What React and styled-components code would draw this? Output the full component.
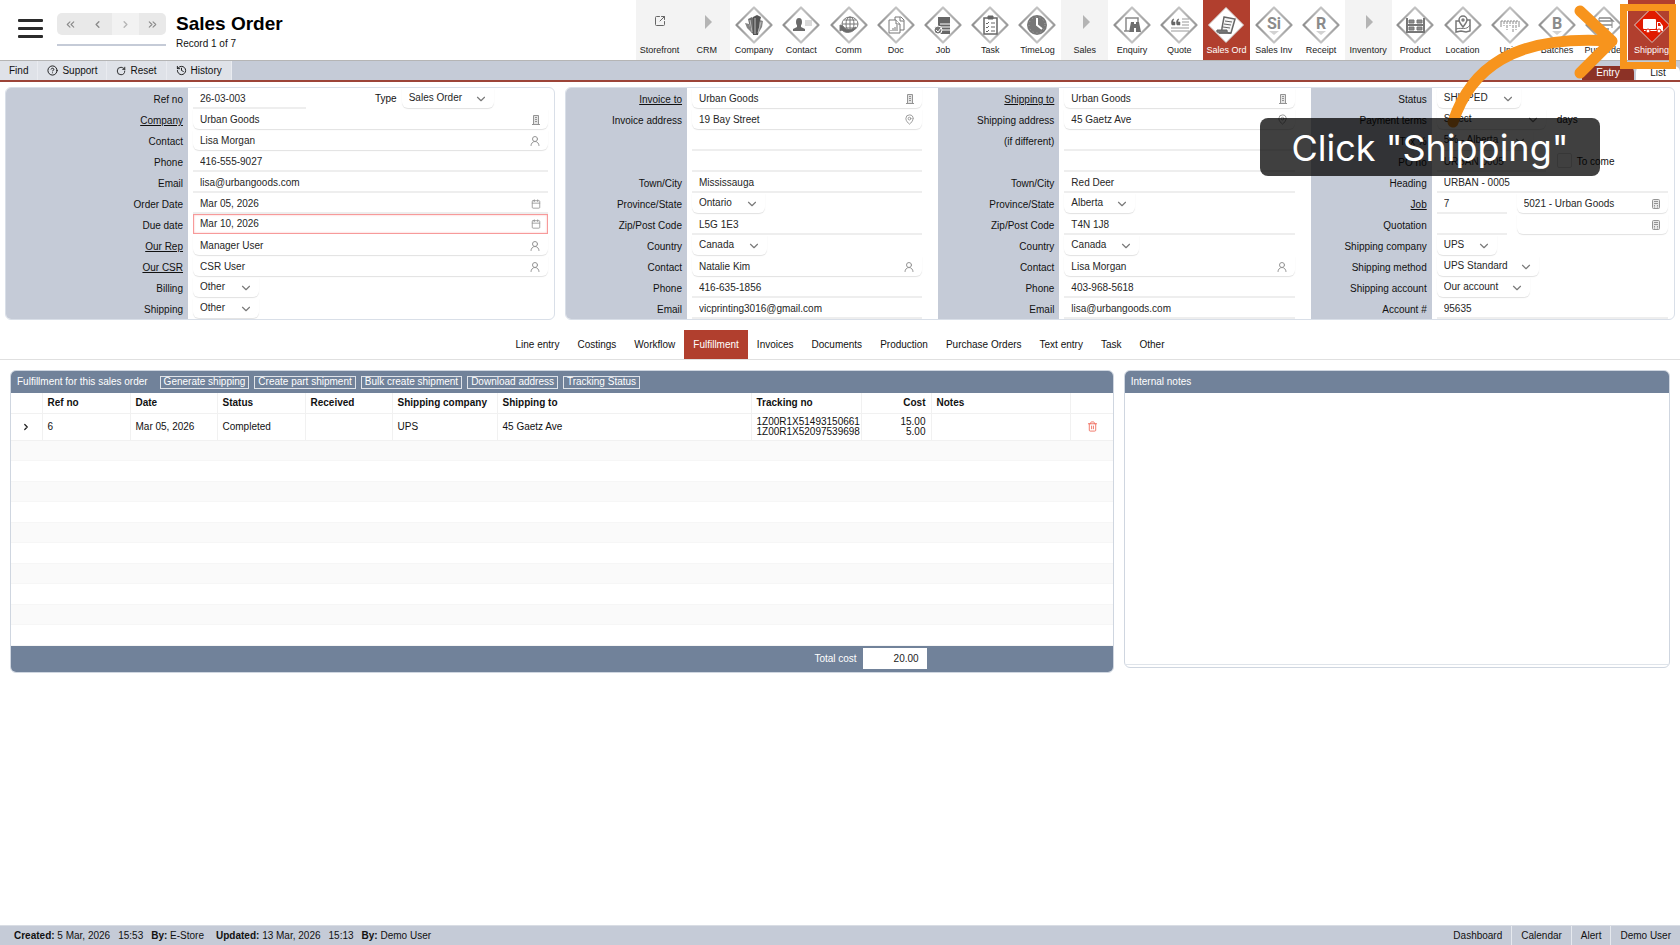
import React, { useState } from "react";
import styled, { createGlobalStyle, css } from "styled-components";
import {
  Calendar,
  ChevronDown,
  ChevronLeft,
  ChevronRight,
  ChevronsLeft,
  ChevronsRight,
  CircleHelp,
  History,
  MapPin,
  RotateCw,
  SquareArrowOutUpRight,
  Trash2,
  UserRound,
} from "lucide-react";

const GlobalStyle = createGlobalStyle`
  * {
    box-sizing: border-box;
  }
  body {
    margin: 0;
    background: #fff;
    color: #111;
    font-family: "Liberation Sans", Arial, sans-serif;
    font-size: 10px;
    line-height: 12px;
  }
  button, input, select, textarea {
    font: inherit;
    color: inherit;
    margin: 0;
    padding: 0;
    border: none;
    background: none;
    outline: none;
  }
  a {
    color: inherit;
  }
`;

const Page = styled.div`
  position: relative;
  display: flex;
  flex-direction: column;
  min-height: 100vh;
`;

/* ---------- header ---------- */

const Header = styled.header`
  display: flex;
  align-items: stretch;
  height: 61px;
  padding-right: 5px;
  border-bottom: 1px solid #b5b5b5;
`;

const MenuButton = styled.button`
  align-self: flex-start;
  display: flex;
  flex-direction: column;
  gap: 5px;
  width: 25px;
  margin: 19px 14px 0 18px;
`;

const MenuLine = styled.span`
  height: 3px;
  border-radius: 1px;
  background: #2b2b2b;
`;

const Pager = styled.div`
  width: 109px;
  margin-top: 13px;
`;

const PagerButtons = styled.div`
  display: flex;
  height: 22px;
  border-radius: 5px;
  overflow: hidden;
  background: #e9e9e9;
`;

const PagerButton = styled.button`
  flex: 1;
  display: flex;
  align-items: center;
  justify-content: center;
  color: ${(props) => (props.$dim ? "#b5b5b5" : "#8a8a8a")};
  background: ${(props) => (props.$dim ? "#f2f2f2" : "transparent")};
`;

const PagerTrack = styled.div`
  height: 2px;
  margin-top: 9px;
  background: #c5cbd7;
`;

const Heading = styled.div`
  margin: 12px 0 0 10px;
`;

const Title = styled.h1`
  margin: 0;
  font-size: 19px;
  line-height: 24px;
  color: #000;
`;

const RecordCount = styled.div`
  margin-top: 2px;
`;

const Nav = styled.nav`
  display: flex;
  width: 1039px;
  margin-left: auto;
`;

const NavItem = styled.a`
  position: relative;
  flex: 1 1 0;
  display: flex;
  flex-direction: column;
  align-items: center;
  height: 60px;
  padding-top: 6px;
  font-size: 9px;
  line-height: 12px;
  text-decoration: none;
  white-space: nowrap;
  color: ${(props) => (props.$active ? "#fff" : "#222")};
  background: ${(props) =>
    props.$active ? "#b13f2e" : props.$group ? "#f3f3f3" : "transparent"};
`;

const NavIcon = styled.span`
  display: flex;
  align-items: ${(props) => (props.$high ? "flex-start" : "center")};
  justify-content: center;
  height: 38px;
  padding-top: ${(props) => (props.$high ? "9px" : "0")};
  color: #666;
`;

const Highlight = styled.span`
  position: absolute;
  z-index: 2;
  top: 4px;
  left: -8px;
  right: -1px;
  height: 65px;
  border: 7px solid #f7941d;
`;

/* ---------- tool bar ---------- */

const Toolbar = styled.div`
  display: flex;
  height: 21px;
  background: #c5cbd7;
  border-bottom: 2px solid #9c4438;
`;

const ToolButton = styled.button`
  display: flex;
  align-items: center;
  gap: 4px;
  padding: 0 9px;
  background: #dfe2e8;
  border-right: 1px solid #e9ebf0;
`;

const ViewTabs = styled.div`
  display: flex;
  align-items: flex-end;
  gap: 2px;
  margin-left: auto;
`;

const ViewTab = styled.button`
  width: ${(props) => (props.$active ? "52px" : "44px")};
  height: 14px;
  border-radius: 6px 6px 0 0;
  color: ${(props) => (props.$active ? "#fff" : "#222")};
  background: ${(props) => (props.$active ? "#8c3226" : "#fff")};
`;

/* ---------- order form ---------- */

const FormArea = styled.main`
  display: grid;
  grid-template-columns: 550fr 1110fr;
  gap: 10px;
  padding: 5px 5px 0;
`;

const Panel = styled.section`
  display: grid;
  grid-template-columns: ${(props) => props.$columns || "1fr"};
  border: 1px solid #d9dfe8;
  border-radius: 6px;
  overflow: hidden;
`;

const FormRow = styled.div`
  display: grid;
  grid-template-columns: ${(props) => (props.$wide ? "182px" : "121px")} 1fr;
  height: 21px;
`;

const FormLabel = styled.label`
  padding: 5px 5px 0 0;
  line-height: 13px;
  text-align: right;
  background: #c5cbd7;
`;

const Fields = styled.div`
  display: flex;
  align-items: flex-start;
  padding: 0 ${(props) => (props.$tight ? "6px" : "16px")} 0 5px;
`;

const fieldBox = css`
  height: 20px;
  border-radius: 0 0 6px 6px;
  box-shadow: 0 1px 1px #e2e2e2;
`;

const FieldBox = styled.span`
  display: flex;
  align-items: center;
  flex: ${(props) => (props.$width ? "none" : "1")};
  width: ${(props) => props.$width || 0}px;
  min-width: 0;
  padding: 1px 7px 0;
  color: #262626;
  ${(props) =>
    props.$boxed
      ? fieldBox
      : css`
          height: 21px;
          padding-top: 2px;
          border-bottom: 2px solid #eeeeee;
        `}
  ${(props) =>
    props.$alert &&
    css`
      padding: 0 6px;
      border-radius: 0;
      border: 1px solid #f79a9a;
      box-shadow: inset 0 0 2px #f9b5b5;
    `}
  svg {
    flex: none;
    color: #949494;
  }
`;

const FieldInput = styled.input`
  flex: 1;
  min-width: 0;
  width: 100%;
  height: 12px;
  text-overflow: clip;
`;

const SelectBox = styled.span`
  position: relative;
  width: ${(props) => props.$width}px;
  ${fieldBox}
  svg {
    position: absolute;
    top: 4px;
    right: 6px;
    color: #7a7a7a;
    pointer-events: none;
  }
`;

const SelectInput = styled.select`
  display: block;
  appearance: none;
  width: 100%;
  height: 20px;
  padding-left: 7px;
  color: #262626;
`;

const Spacer = styled.span`
  width: ${(props) => props.$width}px;
`;

const SideLabel = styled.label`
  padding: 5px 5px 0 0;
`;

const Tick = styled.input`
  appearance: none;
  width: 15px;
  height: 15px;
  margin: 2px 5px 0 0;
  border: 1px solid #dcdcdc;
  border-radius: 2px;
`;

/* ---------- section tabs ---------- */

const Tabs = styled.div`
  display: flex;
  justify-content: center;
  height: 40px;
  padding-top: 10px;
  border-bottom: 1px solid #e0e0e0;
`;

const Tab = styled.button`
  padding: 0 9px;
  color: ${(props) => (props.$active ? "#fff" : "#111")};
  background: ${(props) => (props.$active ? "#b13f2e" : "transparent")};
`;

/* ---------- lower panels ---------- */

const Lower = styled.div`
  display: grid;
  grid-template-columns: 101fr 50fr;
  align-items: start;
  gap: 10px;
  padding: 10px 10px 0;
`;

const Card = styled.section`
  border: 1px solid #cfd6e0;
  border-radius: 6px;
  overflow: hidden;
`;

const CardHeader = styled.div`
  display: flex;
  align-items: center;
  gap: 5px;
  height: 22px;
  padding: 0 6px;
  color: #fff;
  background: #71829a;
`;

const CardTitle = styled.h2`
  margin: 0 7px 0 0;
  font-size: 10px;
  line-height: 12px;
  font-weight: normal;
`;

const ActionButton = styled.button`
  height: 13px;
  padding: 0 3px;
  line-height: 10px;
  border: 1px solid #dfe3e9;
`;

const Table = styled.table`
  width: 100%;
  table-layout: fixed;
  border-collapse: collapse;
  th,
  td {
    padding: 0 5px;
    text-align: left;
    border-right: 1px solid #f1f1f1;
    border-bottom: 1px solid #f1f1f1;
  }
  th {
    height: 20px;
  }
  td {
    height: 27px;
    line-height: 10px;
  }
  th:last-child,
  td:last-child {
    border-right: none;
  }
  .icon {
    text-align: center;
  }
  .number {
    text-align: right;
  }
`;

const IconButton = styled.button`
  display: inline-flex;
  vertical-align: middle;
  color: ${(props) => (props.$danger ? "#f07060" : "#222")};
`;

const EmptyRows = styled.div`
  display: flex;
  flex-direction: column;
  height: 205px;
`;

const EmptyRow = styled.div`
  flex: 1;
  border-bottom: 1px solid #f6f6f6;
  &:nth-child(odd) {
    background: #fafafa;
  }
`;

const CardFooter = styled.div`
  display: flex;
  align-items: center;
  height: 26px;
  padding-right: 186px;
  justify-content: flex-end;
  gap: 6px;
  color: #fff;
  background: #71829a;
`;

const TotalInput = styled.input`
  width: 64px;
  height: 21px;
  padding-right: 8px;
  text-align: right;
  color: #222;
  background: #fff;
`;

const Notes = styled.textarea`
  display: block;
  width: 100%;
  height: 272px;
  margin-bottom: 2px;
  border-bottom: 1px solid #dfe4ea;
  resize: none;
`;

/* ---------- status bar ---------- */

const StatusBar = styled.footer`
  display: flex;
  align-items: stretch;
  justify-content: space-between;
  height: 20px;
  margin-top: auto;
  background: #c5cbd7;
  border-top: 1px solid #d9dde4;
`;

const StatusInfo = styled.div`
  display: flex;
  align-items: center;
  gap: 8px;
  padding-left: 14px;
`;

const StatusGroup = styled.span`
  display: flex;
  gap: 8px;
  margin-right: 4px;
`;

const StatusLinks = styled.div`
  display: flex;
`;

const StatusLink = styled.a`
  display: flex;
  align-items: center;
  padding: 0 9px;
  text-decoration: none;
  & + & {
    border-left: 1px solid #e6e9ee;
  }
`;

/* ---------- tour overlay ---------- */

const Arrow = styled.svg`
  position: absolute;
  z-index: 3;
  top: 0;
  right: 60px;
  pointer-events: none;
`;

const Callout = styled.div`
  position: absolute;
  z-index: 4;
  top: 118px;
  right: 80px;
  width: 340px;
  height: 58px;
  border-radius: 8px;
  font-family: Inter, sans-serif;
  font-size: 36px;
  line-height: 60px;
  text-align: center;
  white-space: nowrap;
  color: #fff;
  background: rgba(0, 0, 0, 0.75);
`;

/* ---------- drawings ---------- */

const glyphs = {
  company: (
    <g fill="#6f6f6f">
      <path d="M13 13l4-2 2 2v16l-3-3z" />
      <path d="M18 11l4-2 4 2-1 4-2 14h-5z" fill="#555" />
      <path d="M25 14l3 1-1 6-4 7z" fill="#858585" />
      <path d="M10 17l4 1 3 9-5-5z" fill="#858585" />
      <path d="M20 12v16M15 14l2 12M26 16l-3 11" stroke="#bdbdbd" />
    </g>
  ),
  contact: (
    <g fill="#6a6a6a">
      <ellipse cx="17" cy="16" rx="3" ry="4" />
      <path d="M15 18h4v3l4 2v2H11v-2l4-2z" />
      <path d="M23 15h7M23 17h7M23 19h7" stroke="#b5b5b5" />
    </g>
  ),
  comm: (
    <g fill="none" stroke="#777">
      <ellipse cx="20" cy="18" rx="8" ry="7" />
      <ellipse cx="20" cy="18" rx="4" ry="7" />
      <path d="M20 11v14M12 18h16M14 14h12M14 22h12" />
      <path d="M10 19l3 1c2 4 7 5 13 1-2 6-11 7-14 3l-2 1z" fill="#6a6a6a" />
    </g>
  ),
  doc: (
    <g fill="#fff" stroke="#777">
      <path d="M18 11h6l3 3v10h-9z" />
      <path d="M23 11v4h4" />
      <path d="M12 14h7l4 4v9H12z" />
      <path d="M19 14v4h4" />
      <path d="M14 25v-1M16 25v-3M18 25v-4M20 25v-6" />
    </g>
  ),
  job: (
    <g>
      <path d="M14 11h12v17H14z" fill="#666" />
      <path d="M16 18h10M16 21h10M16 24h10" stroke="#fff" />
      <circle cx="14" cy="24" r="4" fill="#777" stroke="#fff" />
      <path d="M12 24l2 2 3-4" fill="none" stroke="#fff" />
    </g>
  ),
  task: (
    <g fill="none" stroke="#666">
      <path d="M13 12h13v16H13z" strokeWidth="1.5" />
      <path d="M17 13v-3h5v3z" fill="#666" />
      <path d="M15 17l1 1 2-2M15 21l1 1 2-2M15 25l1 1 2-2M20 17h4M20 21h4M20 25h4" />
    </g>
  ),
  timelog: (
    <g>
      <circle cx="19" cy="19" r="10" fill="#777" />
      <circle cx="19" cy="19" r="8" fill="none" stroke="#aaa" strokeDasharray="1 3" />
      <path d="M19 12v7l5 4" fill="none" stroke="#fff" strokeWidth="2" />
    </g>
  ),
  enquiry: (
    <g fill="#6f6f6f">
      <path d="M13 25V12h12v4M11 25h5" fill="none" stroke="#8a8a8a" strokeWidth="1.5" />
      <path d="M18 16h3v2h2v-2h3l2 10h-5v-4h-2v4h-5z" />
    </g>
  ),
  quote: (
    <g>
      <path
        d="M13 13c-2 2-2 4-1 6h3v-3h-2c0-1 0-2 1-3zM18 13c-2 2-2 4-1 6h3v-3h-2c0-1 0-2 1-3z"
        fill="#666"
        stroke="#666"
        strokeWidth="0.5"
      />
      <path d="M22 13h7M22 16h7M22 19h7M11 22h18M11 25h18" stroke="#999" />
    </g>
  ),
  salesOrd: (
    <g fill="none" stroke="#666">
      <path d="M17 11l11 2-4 14H12c3 0 3-3 3-5z" fill="#f5f5f5" strokeWidth="1.5" />
      <path d="M18 15l7 1M17 18l7 1M16 21l7 1" />
      <path d="M10 24h10c0 3 2 4 4 3H13c-2 0-4-1-3-3z" fill="#777" />
    </g>
  ),
  product: (
    <g fill="none" stroke="#777">
      <path d="M11 12v15M28 12v15" strokeWidth="2" />
      <path d="M11 19h17M11 26h17" strokeWidth="2" />
      <path d="M13 14h5v3h-5zM21 14h5v3h-5zM13 21h5v3h-5zM21 21h5v3h-5z" fill="#8a8a8a" />
    </g>
  ),
  location: (
    <g fill="none" stroke="#777" strokeWidth="1.5">
      <path d="M15 15h-3v11l5-1 5 1 4-1V14h-3" />
      <path d="M12 23c6-2 10 2 14-4" strokeWidth="1" />
      <path d="M19 21c-4-5-4-6-4-7a4 4 0 018 0c0 1 0 2-4 7z" fill="#fff" />
      <circle cx="19" cy="14" r="1" />
    </g>
  ),
  units: (
    <g stroke="#8a8a8a">
      <path d="M10 15h18" strokeDasharray="2 1" />
      <path d="M10 15v6M28 15v6" />
      <path d="M13 15v5M16 15v9M19 15v5M22 15v12M25 15v9" strokeDasharray="3 1" />
    </g>
  ),
  purchase: (
    <g fill="none" stroke="#888">
      <path d="M14 12h11l3 3H14M14 19h13M24 23H13l-3-3h5" strokeWidth="1.5" />
      <path d="M14 12v4M27 16v6" />
    </g>
  ),
  shipping: (
    <g fill="#fff">
      <rect x="10" y="13" width="13" height="10" rx="1" />
      <path d="M24 16h3l3 4v4h-6z" />
      <path d="M11 24h19v1H11z" />
      <circle cx="15" cy="25" r="2" stroke="#e01b00" />
      <circle cx="26" cy="25" r="2" stroke="#e01b00" />
      <path d="M25 17h2l1 3h-3z" fill="#e01b00" />
    </g>
  ),
};

const Letter = styled.text`
  font-family: Roboto, sans-serif;
  font-size: ${(props) => props.$size}px;
  font-weight: 700;
  fill: #8b8b8b;
  text-anchor: middle;
`;

const Diamond = ({ glyph, letter, tone }) => (
  <svg width="38" height="38" viewBox="0 0 38 38" aria-hidden="true">
    <defs>
      <linearGradient id="bevel" x1="0" y1="0" x2="1" y2="0">
        <stop offset="0" stopColor="#8f8f8f" />
        <stop offset="0.5" stopColor="#c4c4c4" />
        <stop offset="1" stopColor="#9a9a9a" />
      </linearGradient>
    </defs>
    {tone && <path d="M19 3l17 17-17 17L3 20z" fill="#6d2118" opacity="0.6" />}
    <path
      d="M19 1.5L36.5 19 19 36.5 1.5 19z"
      fill={tone === "red" ? "#e01b00" : "#fff"}
      stroke={tone ? "#d9d4d2" : "url(#bevel)"}
      strokeWidth={tone ? 1 : 2.2}
      strokeLinejoin="round"
    />
    {letter ? (
      <>
        <Letter x="19" y="23" $size={16}>
          {letter}
        </Letter>
        <path d="M14 25h10l-5 4z" fill="#d2d2d2" />
      </>
    ) : (
      glyphs[glyph]
    )}
  </svg>
);

const BuildingIcon = () => (
  <svg width="10" height="12" viewBox="0 0 10 12" fill="none" stroke="currentColor">
    <path d="M2.5 10.5v-9h5v9z" fill="#e4e4e4" />
    <path d="M1 10.5h8M4 3.5h2M4 5.5h2M4 7.5h2" />
  </svg>
);

const JobIcon = () => (
  <svg width="10" height="12" viewBox="0 0 10 12" fill="none" stroke="currentColor">
    <rect x="1.5" y="1.5" width="7" height="9" rx="1" fill="#e8e8e8" />
    <path d="M3 3.5h4M3 5.5h4M3 7.5h1M6 7.5h1M3 9h1M6 9h1" />
  </svg>
);

const UserIcon = () => <UserRound size={12} strokeWidth={2} />;

const fieldIcons = {
  building: <BuildingIcon />,
  job: <JobIcon />,
  user: <UserIcon />,
  pin: <MapPin size={11} strokeWidth={2} />,
  calendar: <Calendar size={10} strokeWidth={2} />,
};

/* ---------- data ---------- */

const navItems = [
  { label: "Storefront", group: true, link: true },
  { label: "CRM", group: true },
  { label: "Company", glyph: "company" },
  { label: "Contact", glyph: "contact" },
  { label: "Comm", glyph: "comm" },
  { label: "Doc", glyph: "doc" },
  { label: "Job", glyph: "job" },
  { label: "Task", glyph: "task" },
  { label: "TimeLog", glyph: "timelog" },
  { label: "Sales", group: true },
  { label: "Enquiry", glyph: "enquiry" },
  { label: "Quote", glyph: "quote" },
  { label: "Sales Ord", glyph: "salesOrd", tone: "light" },
  { label: "Sales Inv", letter: "Si" },
  { label: "Receipt", letter: "R" },
  { label: "Inventory", group: true },
  { label: "Product", glyph: "product" },
  { label: "Location", glyph: "location" },
  { label: "Units", glyph: "units" },
  { label: "Batches", letter: "B" },
  { label: "Pur Order", glyph: "purchase" },
  { label: "Shipping", glyph: "shipping", tone: "red", highlight: true },
];

const text = (value, extra) => ({ kind: "text", value, ...extra });
const lookup = (value, icon, extra) => ({ kind: "lookup", value, icon, ...extra });
const select = (value, width) => ({ kind: "select", value, width });
const space = (width) => ({ kind: "space", width });

const orderRows = [
  {
    label: "Ref no",
    fields: [
      text("26-03-003", { width: 113 }),
      space(69),
      { kind: "label", value: "Type", id: "order-type" },
      { ...select("Sales Order", 92), id: "order-type" },
    ],
  },
  { label: "Company", link: true, fields: [lookup("Urban Goods", "building")] },
  { label: "Contact", fields: [lookup("Lisa Morgan", "user")] },
  { label: "Phone", fields: [text("416-555-9027")] },
  { label: "Email", fields: [text("lisa@urbangoods.com")] },
  { label: "Order Date", fields: [text("Mar 05, 2026", { icon: "calendar" })] },
  { label: "Due date", fields: [lookup("Mar 10, 2026", "calendar", { alert: true })] },
  { label: "Our Rep", link: true, fields: [lookup("Manager User", "user")] },
  { label: "Our CSR", link: true, fields: [lookup("CSR User", "user")] },
  { label: "Billing", fields: [select("Other", 66)] },
  { label: "Shipping", fields: [select("Other", 66)] },
];

const invoiceRows = [
  { label: "Invoice to", link: true, fields: [lookup("Urban Goods", "building")] },
  { label: "Invoice address", fields: [lookup("19 Bay Street", "pin")] },
  { label: "", name: "Invoice address line 2", fields: [text("")] },
  { label: "", name: "Invoice address line 3", fields: [text("")] },
  { label: "Town/City", fields: [text("Mississauga")] },
  { label: "Province/State", fields: [select("Ontario", 73)] },
  { label: "Zip/Post Code", fields: [text("L5G 1E3")] },
  { label: "Country", fields: [select("Canada", 75)] },
  { label: "Contact", fields: [lookup("Natalie Kim", "user")] },
  { label: "Phone", fields: [text("416-635-1856")] },
  { label: "Email", fields: [text("vicprinting3016@gmail.com")] },
];

const shippingRows = [
  { label: "Shipping to", link: true, fields: [lookup("Urban Goods", "building")] },
  { label: "Shipping address", fields: [lookup("45 Gaetz Ave", "pin")] },
  { label: "(if different)", fields: [text("")] },
  { label: "", name: "Shipping address line 3", fields: [text("")] },
  { label: "Town/City", fields: [text("Red Deer")] },
  { label: "Province/State", fields: [select("Alberta", 71)] },
  { label: "Zip/Post Code", fields: [text("T4N 1J8")] },
  { label: "Country", fields: [select("Canada", 75)] },
  { label: "Contact", fields: [lookup("Lisa Morgan", "user")] },
  { label: "Phone", fields: [text("403-968-5618")] },
  { label: "Email", fields: [text("lisa@urbangoods.com")] },
];

const statusRows = [
  { label: "Status", fields: [select("SHIPPED", 84)] },
  {
    label: "Payment terms",
    fields: [select("Select", 109), space(11), { kind: "label", value: "days" }],
  },
  { label: "Tax %", fields: [select("5% - Alberta", 96)] },
  {
    label: "PO no",
    fields: [
      text("URBAN 0005", { width: 109 }),
      space(11),
      { kind: "tick", value: "To come", id: "to-come" },
    ],
  },
  { label: "Heading", fields: [text("URBAN - 0005")] },
  {
    label: "Job",
    link: true,
    fields: [text("7", { width: 70 }), space(10), lookup("5021 - Urban Goods", "job")],
  },
  {
    label: "Quotation",
    fields: [text("", { width: 70 }), space(10), lookup("", "job")],
  },
  { label: "Shipping company", fields: [select("UPS", 60)] },
  { label: "Shipping method", fields: [select("UPS Standard", 102)] },
  { label: "Shipping account", fields: [select("Our account", 93)] },
  { label: "Account #", fields: [text("95635")] },
];

const tabs = [
  "Line entry",
  "Costings",
  "Workflow",
  "Fulfillment",
  "Invoices",
  "Documents",
  "Production",
  "Purchase Orders",
  "Text entry",
  "Task",
  "Other",
];

const actions = [
  "Generate shipping",
  "Create part shipment",
  "Bulk create shipment",
  "Download address",
  "Tracking Status",
];

const columnWidths = [31, 88, 87, 88, 87, 105, 254, 110, 70, 139, 44];

/* ---------- components ---------- */

const Field = ({ field, id, name }) => {
  if (field.kind === "space") return <Spacer $width={field.width} />;
  if (field.kind === "label")
    return <SideLabel htmlFor={field.id}>{field.value}</SideLabel>;
  if (field.kind === "tick")
    return (
      <>
        <Tick type="checkbox" id={field.id} />
        <SideLabel htmlFor={field.id}>{field.value}</SideLabel>
      </>
    );
  if (field.kind === "select")
    return (
      <SelectBox $width={field.width}>
        <SelectInput id={field.id || id} defaultValue={field.value}>
          <option>{field.value}</option>
        </SelectInput>
        <ChevronDown size={14} strokeWidth={2} />
      </SelectBox>
    );
  return (
    <FieldBox
      $boxed={field.kind === "lookup"}
      $width={field.width}
      $alert={field.alert}
    >
      <FieldInput id={id} aria-label={name} defaultValue={field.value} />
      {field.icon && fieldIcons[field.icon]}
    </FieldBox>
  );
};

const FormSection = ({ prefix, rows, wide, tight }) => (
  <div>
    {rows.map((row, index) => {
      const id = `${prefix}-${index}`;
      return (
        <FormRow key={id} $wide={wide}>
          <FormLabel htmlFor={id}>
            {row.link ? <a href={`#${id}`}>{row.label}</a> : row.label}
          </FormLabel>
          <Fields $tight={tight}>
            {row.fields.map((field, i) => (
              <Field
                key={i}
                field={field}
                id={i === 0 ? id : `${id}-${i}`}
                name={row.name || row.label}
              />
            ))}
          </Fields>
        </FormRow>
      );
    })}
  </div>
);

const NavPicture = ({ item }) => {
  if (item.link)
    return (
      <NavIcon $high>
        <SquareArrowOutUpRight size={12} strokeWidth={2} />
      </NavIcon>
    );
  if (item.group)
    return (
      <NavIcon $high>
        <svg width="10" height="14" viewBox="0 0 10 14">
          <path d="M3 0l7 7-7 7z" fill="#b4b4b4" />
        </svg>
      </NavIcon>
    );
  return (
    <NavIcon>
      <Diamond glyph={item.glyph} letter={item.letter} tone={item.tone} />
    </NavIcon>
  );
};

const App = () => {
  const [activeTab, setActiveTab] = useState("Fulfillment");

  return (
    <Page>
      <GlobalStyle />
      <Header>
        <MenuButton aria-label="Menu">
          <MenuLine />
          <MenuLine />
          <MenuLine />
        </MenuButton>
        <Pager>
          <PagerButtons>
            <PagerButton aria-label="First">
              <ChevronsLeft size={13} />
            </PagerButton>
            <PagerButton aria-label="Previous">
              <ChevronLeft size={11} strokeWidth={3} />
            </PagerButton>
            <PagerButton aria-label="Next" $dim>
              <ChevronRight size={11} strokeWidth={3} />
            </PagerButton>
            <PagerButton aria-label="Last">
              <ChevronsRight size={13} />
            </PagerButton>
          </PagerButtons>
          <PagerTrack />
        </Pager>
        <Heading>
          <Title>Sales Order</Title>
          <RecordCount>Record 1 of 7</RecordCount>
        </Heading>
        <Nav>
          {navItems.map((item) => (
            <NavItem
              key={item.label}
              href="#nav"
              $group={item.group}
              $active={Boolean(item.tone)}
            >
              <NavPicture item={item} />
              {item.label}
              {item.highlight && <Highlight />}
            </NavItem>
          ))}
        </Nav>
      </Header>

      <Toolbar>
        <ToolButton>Find</ToolButton>
        <ToolButton>
          <CircleHelp size={11} />
          Support
        </ToolButton>
        <ToolButton>
          <RotateCw size={10} />
          Reset
        </ToolButton>
        <ToolButton>
          <History size={11} />
          History
        </ToolButton>
        <ViewTabs>
          <ViewTab $active>Entry</ViewTab>
          <ViewTab>List</ViewTab>
        </ViewTabs>
      </Toolbar>

      <FormArea>
        <Panel>
          <FormSection prefix="order" rows={orderRows} wide tight />
        </Panel>
        <Panel $columns="41fr 41fr 40fr">
          <FormSection prefix="invoice" rows={invoiceRows} />
          <FormSection prefix="shipping" rows={shippingRows} />
          <FormSection prefix="status" rows={statusRows} tight />
        </Panel>
      </FormArea>

      <Tabs>
        {tabs.map((tab) => (
          <Tab
            key={tab}
            $active={tab === activeTab}
            onClick={() => setActiveTab(tab)}
          >
            {tab}
          </Tab>
        ))}
      </Tabs>

      <Lower>
        <Card>
          <CardHeader>
            <CardTitle>Fulfillment for this sales order</CardTitle>
            {actions.map((action) => (
              <ActionButton key={action}>{action}</ActionButton>
            ))}
          </CardHeader>
          <Table>
            <colgroup>
              {columnWidths.map((width, index) => (
                <col key={index} width={width} />
              ))}
            </colgroup>
            <thead>
              <tr>
                <th />
                <th>Ref no</th>
                <th>Date</th>
                <th>Status</th>
                <th>Received</th>
                <th>Shipping company</th>
                <th>Shipping to</th>
                <th>Tracking no</th>
                <th className="number">Cost</th>
                <th>Notes</th>
                <th />
              </tr>
            </thead>
            <tbody>
              <tr>
                <td className="icon">
                  <IconButton aria-label="Expand">
                    <ChevronRight size={10} strokeWidth={3} />
                  </IconButton>
                </td>
                <td>6</td>
                <td>Mar 05, 2026</td>
                <td>Completed</td>
                <td />
                <td>UPS</td>
                <td>45 Gaetz Ave</td>
                <td>
                  1Z00R1X51493150661
                  <br />
                  1Z00R1X52097539698
                </td>
                <td className="number">
                  15.00
                  <br />
                  5.00
                </td>
                <td />
                <td className="icon">
                  <IconButton aria-label="Delete" $danger>
                    <Trash2 size={11} />
                  </IconButton>
                </td>
              </tr>
            </tbody>
          </Table>
          <EmptyRows>
            {Array.from({ length: 10 }, (_, index) => (
              <EmptyRow key={index} />
            ))}
          </EmptyRows>
          <CardFooter>
            <label htmlFor="total-cost">Total cost</label>
            <TotalInput id="total-cost" defaultValue="20.00" />
          </CardFooter>
        </Card>

        <Card>
          <CardHeader>
            <label htmlFor="internal-notes">Internal notes</label>
          </CardHeader>
          <Notes id="internal-notes" />
        </Card>
      </Lower>

      <StatusBar>
        <StatusInfo>
          <StatusGroup>
            <span>
              <b>Created:</b> 5 Mar, 2026
            </span>
            <span>15:53</span>
            <span>
              <b>By:</b> E-Store
            </span>
          </StatusGroup>
          <StatusGroup>
            <span>
              <b>Updated:</b> 13 Mar, 2026
            </span>
            <span>15:13</span>
            <span>
              <b>By:</b> Demo User
            </span>
          </StatusGroup>
        </StatusInfo>
        <StatusLinks>
          <StatusLink href="#dashboard">Dashboard</StatusLink>
          <StatusLink href="#calendar">Calendar</StatusLink>
          <StatusLink href="#alert">Alert</StatusLink>
          <StatusLink href="#user">Demo User</StatusLink>
        </StatusLinks>
      </StatusBar>

      <Arrow width="180" height="130" viewBox="0 0 180 130" aria-hidden="true">
        <path
          d="M13 122C30 70 72 34 172 41M140 11l32 30-32 32"
          fill="none"
          stroke="#f7941d"
          strokeWidth="11"
          strokeLinecap="round"
          strokeLinejoin="round"
        />
      </Arrow>
      <Callout>Click "Shipping"</Callout>
    </Page>
  );
};

export default App;
